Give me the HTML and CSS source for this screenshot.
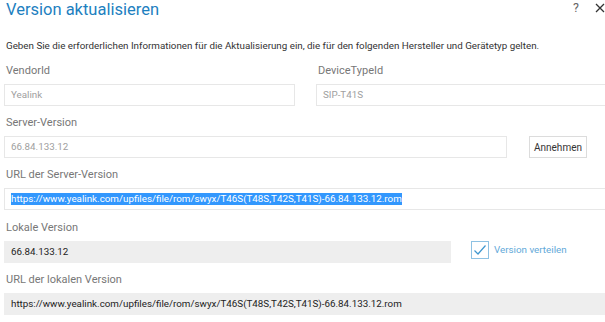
FILE: index.html
```html
<!DOCTYPE html>
<html lang="de">
<head>
<meta charset="utf-8">
<title>Version aktualisieren</title>
<link rel="stylesheet" href="styles.css">
</head>
<body>
<div class="dialog">
  <header class="head">
    <h1 class="title">Version aktualisieren</h1>
    <div class="tools">
      <span class="help">?</span>
      <svg class="close" width="10" height="10" viewBox="0 0 10 10"><path d="M1 1L9 9M9 1L1 9" stroke="#333" stroke-width="1.3" fill="none"/></svg>
    </div>
  </header>
  <p class="desc">Geben Sie die erforderlichen Informationen für die Aktualisierung ein, die für den folgenden Hersteller und Gerätetyp gelten.</p>

  <div class="row two">
    <div class="field">
      <label class="label">VendorId</label>
      <div class="input ro">Yealink</div>
    </div>
    <div class="field">
      <label class="label">DeviceTypeId</label>
      <div class="input ro">SIP-T41S</div>
    </div>
  </div>

  <div class="field">
    <label class="label">Server-Version</label>
    <div class="line">
      <div class="input ro server">66.84.133.12</div>
      <button class="btn">Annehmen</button>
    </div>
  </div>

  <div class="field">
    <label class="label">URL der Server-Version</label>
    <div class="input wide"><span class="sel">https://www.yealink.com/upfiles/file/rom/swyx/T46S(T48S,T42S,T41S)-66.84.133.12.rom</span></div>
  </div>

  <div class="field">
    <label class="label">Lokale Version</label>
    <div class="line">
      <div class="input grey local">66.84.133.12</div>
      <div class="check">
        <span class="box"><svg width="14" height="12" viewBox="0 0 14 12"><path d="M1.5 6.5L5 10L12.5 1.5" stroke="#3f97cf" stroke-width="1.2" fill="none"/></svg></span>
        <span class="check-label">Version verteilen</span>
      </div>
    </div>
  </div>

  <div class="field">
    <label class="label">URL der lokalen Version</label>
    <div class="input grey wide">https://www.yealink.com/upfiles/file/rom/swyx/T46S(T48S,T42S,T41S)-66.84.133.12.rom</div>
  </div>
</div>
</body>
</html>
```
FILE: styles.css
```css
html, body {
  margin: 0;
  padding: 0;
  background: #fff;
  overflow: hidden;
}
body {
  font-family: Roboto, "Liberation Sans", sans-serif;
  color: #333;
}
.dialog {
  width: 630px;
  padding: 0 0 0 4px;
  box-sizing: border-box;
}
.head {
  display: flex;
  justify-content: space-between;
  align-items: flex-start;
  width: 601px;
  height: 20px;
}
.title {
  margin: 0 0 0 2px;
  font-size: 16.5px;
  line-height: 20px;
  font-weight: 400;
  color: #1d80bf;
}
.tools {
  display: flex;
  align-items: center;
  gap: 16px;
  padding-top: 2px;
}
.help {
  font-size: 12.5px;
  line-height: 12px;
  color: #666;
}
.close {
  display: block;
}
.desc {
  margin: 19px 0 0 2px;
  font-size: 9.8px;
  line-height: 14px;
  color: #333;
}
.row.two {
  display: grid;
  grid-template-columns: 291px 1fr;
  column-gap: 21px;
  margin-top: 11px;
}
.field {
  display: flex;
  flex-direction: column;
}
.row.two .field { margin-top: 0; }
.row.two + .field { margin-top: 10px; }
.field + .field { margin-top: 10.4px; }
.label {
  font-size: 11px;
  line-height: 14px;
  color: #777;
  margin: 0 0 6px 2px;
}
.input {
  height: 22px;
  box-sizing: border-box;
  border: 1px solid #e7e7e7;
  padding: 0 6px;
  font-size: 9.8px;
  line-height: 20px;
  color: #333;
  background: #fff;
  white-space: nowrap;
}
.input.ro { color: #a0a0a0; }
.input.grey {
  background: #eeeeee;
  border-color: #eeeeee;
  color: #222;
}
.line {
  display: flex;
  align-items: flex-start;
}
.server { width: 503px; }
.btn {
  margin-left: 22px;
  width: 58px;
  height: 22px;
  border: 1px solid #dcdcdc;
  background: #fff;
  font-family: inherit;
  font-size: 10px;
  color: #333;
  padding: 0;
}
.sel {
  background: #3297fd;
  color: #fff;
  display: inline-block;
  line-height: 12px;
}
.local { width: 447px; }
.check {
  display: flex;
  align-items: center;
  margin-left: 20px;
  gap: 5px;
}
.box {
  width: 18px;
  height: 18px;
  box-sizing: border-box;
  border: 1.5px solid #8ec2e3;
  display: flex;
  align-items: center;
  justify-content: center;
}
.check-label {
  font-size: 9.8px;
  color: #62a9d9;
}
```
